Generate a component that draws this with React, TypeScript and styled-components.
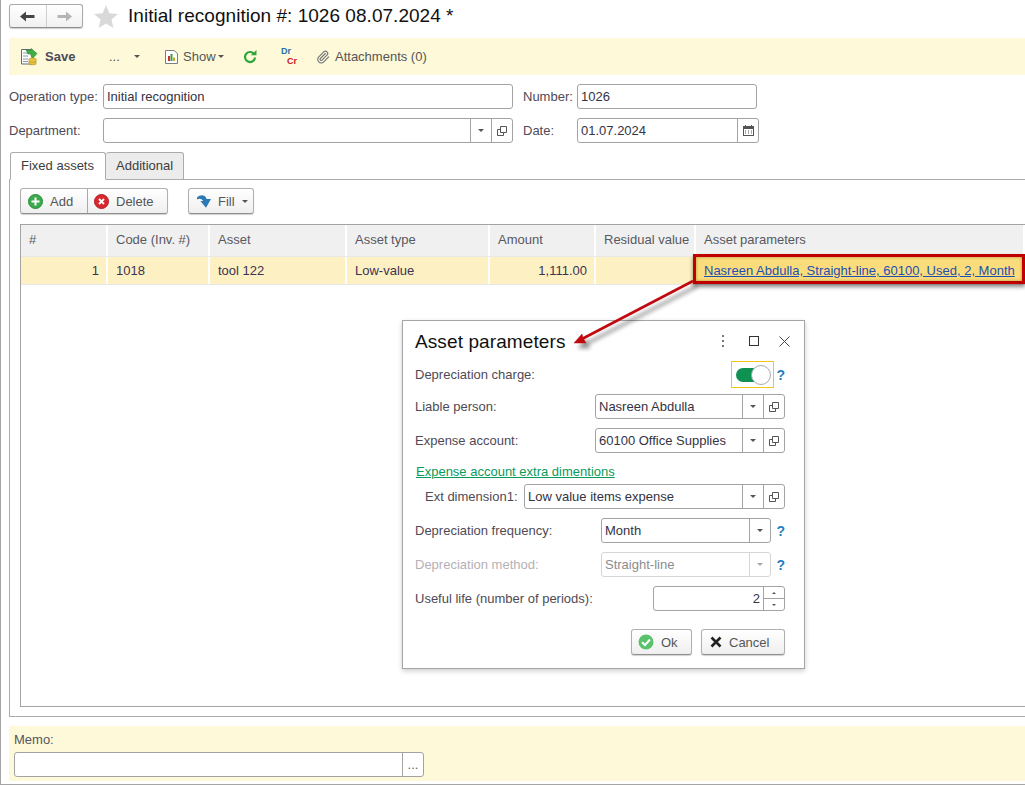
import React from 'react';
import styled, { createGlobalStyle } from 'styled-components';
import { Paperclip } from 'lucide-react';

const GlobalStyle = createGlobalStyle`
  html, body {
    margin: 0;
    padding: 0;
    background: #fff;
  }
  * {
    box-sizing: border-box;
  }
`;

const Page = styled.div`
  position: relative;
  width: 1025px;
  height: 785px;
  overflow: hidden;
  background: #fff;
  border-left: 1px solid #a5a5a5;
  border-bottom: 1px solid #a5a5a5;
  padding: 4px 0 0 8px;
  font-family: 'Liberation Sans', Arial, sans-serif;
  font-size: 13px;
  color: #4b4b4b;
`;

const Header = styled.div`
  display: flex;
  align-items: center;
  height: 24px;
`;

const NavGroup = styled.div`
  display: flex;
  width: 74px;
  height: 24px;
  border: 1px solid #a9a9a9;
  border-bottom-color: #8f8f8f;
  border-radius: 3px;
  background: linear-gradient(#ffffff, #f1f1f1);
  box-shadow: 0 1px 1px rgba(0, 0, 0, 0.2);
`;

const NavCell = styled.div<{ $divider?: boolean }>`
  flex: 1;
  display: flex;
  align-items: center;
  justify-content: center;
  border-right: ${(p) => (p.$divider ? '1px solid #cfcfcf' : 'none')};
`;

const StarWrap = styled.div`
  margin-left: 11px;
  width: 25px;
  height: 24px;
  display: flex;
  align-items: center;
`;

const Title = styled.h1`
  margin: 0 0 0 9px;
  font-size: 19px;
  font-weight: 400;
  letter-spacing: 0.03px;
  color: #111;
`;

const Toolbar = styled.div`
  display: flex;
  align-items: center;
  height: 37px;
  margin-top: 10px;
  background: #fef9d9;
  padding-left: 11px;
`;

const ToolItem = styled.div<{ $w: number }>`
  display: flex;
  align-items: center;
  width: ${(p) => p.$w}px;
  flex: none;
  gap: 5px;
  color: #555;
  white-space: nowrap;
`;

const SaveLabel = styled.span`
  font-weight: 700;
  margin-left: 2px;
  color: #4a4a58;
`;

const Caret = styled.span<{ $c?: string }>`
  display: inline-block;
  width: 0;
  height: 0;
  border-left: 3px solid transparent;
  border-right: 3px solid transparent;
  border-top: 3px solid ${(p) => p.$c || '#555'};
`;

const DrCr = styled.div`
  width: 18px;
  height: 20px;
  font-size: 9px;
  font-weight: 700;
  line-height: 8px;
`;

const Dr = styled.span`
  display: block;
  color: #2a6fa8;
`;

const Cr = styled.span`
  display: block;
  color: #c4161c;
  margin: 2px 0 0 6px;
`;

const FormRow = styled.div<{ $mt: number }>`
  display: flex;
  align-items: center;
  height: 25px;
  margin-top: ${(p) => p.$mt}px;
`;

const Label = styled.label<{ $w: number; $muted?: boolean; $pl?: number }>`
  flex: none;
  width: ${(p) => p.$w}px;
  padding-left: ${(p) => p.$pl || 0}px;
  white-space: nowrap;
  color: ${(p) => (p.$muted ? '#b5b0b5' : '#4f4a55')};
`;

const Field = styled.div<{ $w: number; $muted?: boolean }>`
  flex: none;
  display: flex;
  align-items: stretch;
  width: ${(p) => p.$w}px;
  height: 25px;
  border: 1px solid ${(p) => (p.$muted ? '#d6d6d6' : '#a3a3a3')};
  border-radius: 3px;
  background: #fff;
  color: ${(p) => (p.$muted ? '#8c8c8c' : '#333344')};
`;

const FieldText = styled.div<{ $right?: boolean }>`
  flex: 1;
  min-width: 0;
  line-height: 23px;
  padding: 0 3px;
  white-space: nowrap;
  text-align: ${(p) => (p.$right ? 'right' : 'left')};
`;

const FieldBtn = styled.div<{ $muted?: boolean }>`
  flex: none;
  width: 21px;
  display: flex;
  align-items: center;
  justify-content: center;
  border-left: 1px solid ${(p) => (p.$muted ? '#d6d6d6' : '#a3a3a3')};
  color: #666;
`;

const Spin = styled.div`
  flex: none;
  width: 21px;
  display: flex;
  flex-direction: column;
  border-left: 1px solid #a3a3a3;
`;

const SpinCell = styled.div<{ $up?: boolean }>`
  flex: 1;
  display: flex;
  align-items: center;
  justify-content: center;
  border-bottom: ${(p) => (p.$up ? '1px solid #a3a3a3' : 'none')};
`;

const CaretUp = styled.span`
  width: 0;
  height: 0;
  border-left: 2px solid transparent;
  border-right: 2px solid transparent;
  border-bottom: 2px solid #555;
`;

const CaretDown = styled.span`
  width: 0;
  height: 0;
  border-left: 2px solid transparent;
  border-right: 2px solid transparent;
  border-top: 2px solid #555;
`;

const Tabs = styled.div`
  display: flex;
  margin-top: 9px;
  height: 28px;
  position: relative;
  z-index: 1;
  padding-left: 1px;
`;

const Tab = styled.div<{ $active?: boolean; $w: number }>`
  width: ${(p) => p.$w}px;
  height: 28px;
  line-height: 26px;
  padding-left: ${(p) => (p.$active ? 10 : 10)}px;
  border: 1px solid #ababab;
  border-left-width: ${(p) => (p.$active ? 1 : 0)}px;
  border-bottom: ${(p) => (p.$active ? '1px solid #fff' : '1px solid #ababab')};
  border-radius: 3px 3px 0 0;
  background: ${(p) => (p.$active ? '#fff' : '#ececec')};
  color: #3d3d3d;
`;

const TabPanel = styled.div`
  margin-top: -1px;
  height: 538px;
  border: 1px solid #ababab;
  border-right: none;
  padding: 8px 0 0 10px;
`;

const ButtonBar = styled.div`
  display: flex;
  height: 26px;
`;

const BtnGroup = styled.div<{ $ml?: number }>`
  display: flex;
  height: 26px;
  margin-left: ${(p) => p.$ml || 0}px;
  border: 1px solid #b0b0b0;
  border-bottom-color: #8f8f8f;
  border-radius: 3px;
  background: linear-gradient(#ffffff, #efefef);
  box-shadow: 0 1px 1px rgba(0, 0, 0, 0.18);
`;

const Btn = styled.div<{ $w: number; $divider?: boolean; $pl: number; $gap?: number }>`
  display: flex;
  align-items: center;
  width: ${(p) => p.$w}px;
  padding-left: ${(p) => p.$pl}px;
  gap: ${(p) => p.$gap ?? 7}px;
  border-right: ${(p) => (p.$divider ? '1px solid #a9a9a9' : 'none')};
  color: #555;
`;

const Table = styled.div`
  margin-top: 10px;
  height: 483px;
  border: 1px solid #a3a3a3;
  border-right: none;
`;

const TableRow = styled.div<{ $h: number }>`
  display: grid;
  grid-template-columns: 87px 102px 137px 143px 106px 100px 1fr;
  height: ${(p) => p.$h}px;
  border-bottom: 1px solid #e8e8e8;
`;

const HeadCell = styled.div`
  display: flex;
  align-items: center;
  padding: 0 8px 2px;
  background: #f0f0f0;
  border-right: 2px solid #fff;
  white-space: nowrap;
  color: #58585f;
`;

const Cell = styled.div<{ $right?: boolean }>`
  display: flex;
  align-items: center;
  justify-content: ${(p) => (p.$right ? 'flex-end' : 'flex-start')};
  padding: 0 7px;
  background: #fdf0c3;
  border-right: 2px solid #fff;
  white-space: nowrap;
  color: #3c3350;
`;

const LeftCell = styled(Cell)`
  padding-left: 8px;
`;

const LinkCell = styled(Cell)`
  padding-left: 8px;
  color: #1d4fb0;
  text-decoration: underline;
  background: #fbdc7c;
`;

const Memo = styled.div`
  margin-top: 9px;
  height: 55px;
  background: #fef9d9;
  padding: 6px 0 0 5px;
`;

const MemoLabel = styled.div`
  height: 20px;
  line-height: 16px;
  color: #55555f;
`;

const Highlight = styled.div`
  position: absolute;
  left: 692px;
  top: 254px;
  width: 332px;
  height: 30px;
  border: 3px solid #c00000;
  box-shadow: 0 3px 4px rgba(0, 0, 0, 0.45), inset 0 0 3px rgba(120, 90, 0, 0.6);
  pointer-events: none;
`;

const ArrowSvg = styled.svg`
  position: absolute;
  left: 560px;
  top: 275px;
  z-index: 3;
  overflow: visible;
  filter: drop-shadow(4px 5px 2px rgba(0, 0, 0, 0.45));
`;

const Dialog = styled.div`
  position: absolute;
  left: 401px;
  top: 320px;
  width: 403px;
  height: 349px;
  background: #fff;
  border: 1px solid #a5a5a5;
  box-shadow: 0 2px 5px rgba(0, 0, 0, 0.2);
  padding: 0 19px 0 12px;
  z-index: 2;
`;

const DialogHead = styled.div`
  display: flex;
  align-items: center;
  justify-content: space-between;
  height: 40px;
`;

const DialogTitle = styled.div`
  font-size: 19px;
  letter-spacing: 0.1px;
  color: #111;
  margin-top: 2px;
`;

const DialogIcons = styled.div`
  display: flex;
  align-items: center;
  gap: 20px;
  margin-right: -5px;
`;

const DialogRow = styled.div<{ $mt: number; $h?: number }>`
  display: flex;
  align-items: center;
  height: ${(p) => p.$h || 25}px;
  margin-top: ${(p) => p.$mt}px;
`;

const Spacer = styled.div`
  flex: 1;
`;

const Help = styled.span`
  flex: none;
  width: 14px;
  text-align: right;
  font-weight: 700;
  font-size: 14px;
  color: #1f7fc4;
`;

const ToggleFocus = styled.div`
  display: flex;
  align-items: center;
  justify-content: center;
  width: 43px;
  height: 27px;
  margin-right: -3px;
  border: 1px solid #f5c518;
`;

const ToggleTrack = styled.div`
  position: relative;
  width: 34px;
  height: 14px;
  border-radius: 7px;
  background: #0f9152;
`;

const ToggleKnob = styled.div`
  position: absolute;
  right: -1px;
  top: -3px;
  width: 20px;
  height: 20px;
  border-radius: 50%;
  background: #fff;
  border: 1px solid #a8a8a8;
`;

const SectionLink = styled.a`
  display: block;
  margin-top: 11px;
  height: 16px;
  line-height: 16px;
  padding-left: 1px;
  color: #0a9a5c;
  text-decoration: underline;
`;

const DialogFooter = styled.div`
  display: flex;
  justify-content: flex-end;
  gap: 9px;
  margin-top: 18px;
`;

const DialogBtn = styled.div<{ $w: number; $pl: number }>`
  display: flex;
  align-items: center;
  gap: 7px;
  width: ${(p) => p.$w}px;
  height: 26px;
  padding-left: ${(p) => p.$pl}px;
  border: 1px solid #b0b0b0;
  border-bottom-color: #8f8f8f;
  border-radius: 3px;
  background: linear-gradient(#ffffff, #efefef);
  box-shadow: 0 1px 1px rgba(0, 0, 0, 0.18);
  color: #555;
`;

const OpenIcon = () => (
  <svg width="10" height="10" viewBox="0 0 10 10" fill="none" stroke="#555" strokeWidth="1">
    <path d="M3.5 0.5H9.5V6.5H3.5Z" />
    <path d="M3.5 3.5H0.5V9.5H6.5V6.5" />
  </svg>
);

const CalendarIcon = () => (
  <svg width="11" height="11" viewBox="0 0 11 11">
    <rect x="0.5" y="1.5" width="10" height="9" fill="#fff" stroke="#555" />
    <rect x="0" y="1" width="11" height="3" fill="#555" />
    <rect x="2" y="0" width="1" height="2" fill="#555" />
    <rect x="8" y="0" width="1" height="2" fill="#555" />
    <path d="M2 6h1M5 6h1M8 6h1M2 8h1M5 8h1M8 8h1" stroke="#555" />
  </svg>
);

const NavArrow = ({ color, flip }: { color: string; flip?: boolean }) => (
  <svg width="15" height="11" viewBox="0 0 15 11" style={flip ? { transform: 'scaleX(-1)' } : undefined}>
    <path d="M0 5.5L6 0.5V4H14.5V7H6V10.5Z" fill={color} />
  </svg>
);

const SaveIcon = () => (
  <svg width="18" height="18" viewBox="0 0 18 18">
    <path d="M1.5 1.5H12V16H1.5Z" fill="#fff" stroke="#5d6b78" />
    <path d="M3 5h7M3 8h5M3 11h5M3 13.5h5" stroke="#8b98a5" />
    <path d="M6 2H11V0.5L17 5.5L13 10L11 8V6H8Z" fill="#3fae45" stroke="#2a8a33" strokeWidth="0.6" />
    <ellipse cx="12.5" cy="11.5" rx="3.6" ry="1.5" fill="#e9c53f" stroke="#a88a1c" strokeWidth="0.6" />
    <path d="M9 11.5V16c0 1 7 1 7 0V11.5" fill="#e9c53f" stroke="#a88a1c" strokeWidth="0.6" />
    <path d="M9 13.5c0 1 7 1 7 0" fill="none" stroke="#a88a1c" strokeWidth="0.6" />
  </svg>
);

const ShowIcon = () => (
  <svg width="13" height="14" viewBox="0 0 13 14">
    <path d="M0.5 0.5H9L12.5 3.5V13.5H0.5Z" fill="#fff" stroke="#7d7d7d" />
    <rect x="3" y="6" width="2" height="5" fill="#c4332b" />
    <rect x="5.5" y="4" width="2" height="7" fill="#3f9c45" />
    <rect x="8" y="7.5" width="2" height="3.5" fill="#d9a21c" />
  </svg>
);

const RefreshIcon = () => (
  <svg width="14" height="14" viewBox="0 0 14 14" fill="none">
    <path d="M11.3 4.4A5 5 0 1 0 12 7.5" stroke="#2fa53a" strokeWidth="2.2" />
    <path d="M7.8 5.2H13.5V0Z" fill="#2fa53a" />
  </svg>
);

const Star = () => (
  <svg width="24" height="23" viewBox="0 0 24 23">
    <path d="M12 0L15.4 8.2L24 8.9L17.5 14.6L19.4 23L12 18.5L4.6 23L6.5 14.6L0 8.9L8.6 8.2Z" fill="#d9d9d9" />
  </svg>
);

const AddIcon = () => (
  <svg width="15" height="15" viewBox="0 0 15 15">
    <circle cx="7.5" cy="7.5" r="7" fill="#3aaa4a" stroke="#2b8a3a" />
    <path d="M7.5 3.5v8M3.5 7.5h8" stroke="#fff" strokeWidth="2" />
  </svg>
);

const DeleteIcon = () => (
  <svg width="15" height="15" viewBox="0 0 15 15">
    <circle cx="7.5" cy="7.5" r="7" fill="#d8282f" stroke="#b51d24" />
    <path d="M5 5l5 5M10 5l-5 5" stroke="#fff" strokeWidth="1.8" />
  </svg>
);

const FillIcon = () => (
  <svg width="14" height="13" viewBox="0 0 14 13">
    <path d="M0 2.6C3 -0.4 7 -0.4 9 2.6L9.6 4H14L9 12.8L3.4 6H6.2C4.8 4 2.5 3.2 0 4.4Z" fill="#2b79b5" />
  </svg>
);

const OkIcon = () => (
  <svg width="16" height="16" viewBox="0 0 16 16">
    <circle cx="8" cy="8" r="7.5" fill="#59c26a" />
    <path d="M4 8.2L7 11L12 5.5" fill="none" stroke="#fff" strokeWidth="2" />
  </svg>
);

const CancelIcon = () => (
  <svg width="12" height="12" viewBox="0 0 12 12">
    <path d="M1.5 1.5L10.5 10.5M10.5 1.5L1.5 10.5" stroke="#222" strokeWidth="2.6" />
  </svg>
);

const MoreWrap = styled.span`
  display: flex;
  margin-right: 4px;
`;

const MoreIcon = () => (
  <MoreWrap>
    <svg width="4" height="12" viewBox="0 0 4 12">
      <path d="M1 0h2v2H1zM1 5h2v2H1zM1 10h2v2H1z" fill="#777" />
    </svg>
  </MoreWrap>
);

const MaxIcon = () => (
  <svg width="10" height="10" viewBox="0 0 10 10">
    <rect x="0.5" y="0.5" width="9" height="9" fill="none" stroke="#333" />
  </svg>
);

const CloseIcon = () => (
  <svg width="11" height="11" viewBox="0 0 11 11">
    <path d="M0.5 0.5L10.5 10.5M10.5 0.5L0.5 10.5" stroke="#444" />
  </svg>
);

const columns = ['#', 'Code (Inv. #)', 'Asset', 'Asset type', 'Amount', 'Residual value', 'Asset parameters'];

const App = () => {
  return (
    <Page>
      <GlobalStyle />
      <Header>
        <NavGroup>
          <NavCell $divider>
            <NavArrow color="#444" />
          </NavCell>
          <NavCell>
            <NavArrow color="#b5b5b5" flip />
          </NavCell>
        </NavGroup>
        <StarWrap>
          <Star />
        </StarWrap>
        <Title>Initial recognition #: 1026 08.07.2024 *</Title>
      </Header>

      <Toolbar>
        <ToolItem $w={89}>
          <SaveIcon />
          <SaveLabel>Save</SaveLabel>
        </ToolItem>
        <ToolItem $w={56}>
          <span>...</span>
          <Caret style={{ marginLeft: 9 }} />
        </ToolItem>
        <ToolItem $w={78}>
          <ShowIcon />
          <span>Show</span>
          <Caret style={{ marginLeft: -3 }} />
        </ToolItem>
        <ToolItem $w={38}>
          <RefreshIcon />
        </ToolItem>
        <ToolItem $w={35}>
          <DrCr>
            <Dr>Dr</Dr>
            <Cr>Cr</Cr>
          </DrCr>
        </ToolItem>
        <ToolItem $w={130}>
          <Paperclip size={14} color="#777" />
          <span>Attachments (0)</span>
        </ToolItem>
      </Toolbar>

      <FormRow $mt={9}>
        <Label $w={94}>Operation type:</Label>
        <Field $w={410}>
          <FieldText>Initial recognition</FieldText>
        </Field>
        <Label $w={64} $pl={10}>Number:</Label>
        <Field $w={180}>
          <FieldText>1026</FieldText>
        </Field>
      </FormRow>
      <FormRow $mt={9}>
        <Label $w={94}>Department:</Label>
        <Field $w={410}>
          <FieldText />
          <FieldBtn>
            <Caret />
          </FieldBtn>
          <FieldBtn>
            <OpenIcon />
          </FieldBtn>
        </Field>
        <Label $w={64} $pl={10}>Date:</Label>
        <Field $w={182}>
          <FieldText>01.07.2024</FieldText>
          <FieldBtn>
            <CalendarIcon />
          </FieldBtn>
        </Field>
      </FormRow>

      <Tabs>
        <Tab $active $w={96}>Fixed assets</Tab>
        <Tab $w={78}>Additional</Tab>
      </Tabs>
      <TabPanel>
        <ButtonBar>
          <BtnGroup>
            <Btn $w={67} $divider $pl={7}>
              <AddIcon />
              Add
            </Btn>
            <Btn $w={79} $pl={6}>
              <DeleteIcon />
              Delete
            </Btn>
          </BtnGroup>
          <BtnGroup $ml={20}>
            <Btn $w={64} $pl={8} $gap={7}>
              <FillIcon />
              Fill
              <Caret />
            </Btn>
          </BtnGroup>
        </ButtonBar>
        <Table>
          <TableRow $h={32}>
            {columns.map((c) => (
              <HeadCell key={c}>{c}</HeadCell>
            ))}
          </TableRow>
          <TableRow $h={28}>
            <Cell $right>1</Cell>
            <LeftCell>1018</LeftCell>
            <LeftCell>tool 122</LeftCell>
            <LeftCell>Low-value</LeftCell>
            <Cell $right>1,111.00</Cell>
            <Cell />
            <LinkCell>Nasreen Abdulla, Straight-line, 60100, Used, 2, Month</LinkCell>
          </TableRow>
        </Table>
      </TabPanel>

      <Memo>
        <MemoLabel>Memo:</MemoLabel>
        <Field $w={410}>
          <FieldText />
          <FieldBtn>
            <span>...</span>
          </FieldBtn>
        </Field>
      </Memo>

      <Highlight />
      <ArrowSvg width="140" height="80" viewBox="0 0 140 80">
        <path d="M132 6L19 65" stroke="#c00a0f" strokeWidth="2.6" fill="none" />
        <path d="M13 68L21 59L22 63L25 68Z" fill="#c00a0f" stroke="#c00a0f" strokeWidth="0.5" />
      </ArrowSvg>

      <Dialog>
        <DialogHead>
          <DialogTitle>Asset parameters</DialogTitle>
          <DialogIcons>
            <MoreIcon />
            <MaxIcon />
            <CloseIcon />
          </DialogIcons>
        </DialogHead>
        <DialogRow $mt={0} $h={27}>
          <Label $w={180}>Depreciation charge:</Label>
          <Spacer />
          <ToggleFocus>
            <ToggleTrack>
              <ToggleKnob />
            </ToggleTrack>
          </ToggleFocus>
          <Help>?</Help>
        </DialogRow>
        <DialogRow $mt={6}>
          <Label $w={180}>Liable person:</Label>
          <Field $w={190}>
            <FieldText>Nasreen Abdulla</FieldText>
            <FieldBtn>
              <Caret />
            </FieldBtn>
            <FieldBtn>
              <OpenIcon />
            </FieldBtn>
          </Field>
        </DialogRow>
        <DialogRow $mt={9}>
          <Label $w={180}>Expense account:</Label>
          <Field $w={190}>
            <FieldText>60100 Office Supplies</FieldText>
            <FieldBtn>
              <Caret />
            </FieldBtn>
            <FieldBtn>
              <OpenIcon />
            </FieldBtn>
          </Field>
        </DialogRow>
        <SectionLink>Expense account extra dimentions</SectionLink>
        <DialogRow $mt={4}>
          <Label $w={109} $pl={10}>Ext dimension1:</Label>
          <Field $w={261}>
            <FieldText>Low value items expense</FieldText>
            <FieldBtn>
              <Caret />
            </FieldBtn>
            <FieldBtn>
              <OpenIcon />
            </FieldBtn>
          </Field>
        </DialogRow>
        <DialogRow $mt={9}>
          <Label $w={186}>Depreciation frequency:</Label>
          <Field $w={170}>
            <FieldText>Month</FieldText>
            <FieldBtn>
              <Caret />
            </FieldBtn>
          </Field>
          <Help>?</Help>
        </DialogRow>
        <DialogRow $mt={9}>
          <Label $w={186} $muted>Depreciation method:</Label>
          <Field $w={170} $muted>
            <FieldText>Straight-line</FieldText>
            <FieldBtn $muted>
              <Caret $c="#aaa" />
            </FieldBtn>
          </Field>
          <Help>?</Help>
        </DialogRow>
        <DialogRow $mt={9}>
          <Label $w={238}>Useful life (number of periods):</Label>
          <Field $w={132}>
            <FieldText $right>2</FieldText>
            <Spin>
              <SpinCell $up>
                <CaretUp />
              </SpinCell>
              <SpinCell>
                <CaretDown />
              </SpinCell>
            </Spin>
          </Field>
        </DialogRow>
        <DialogFooter>
          <DialogBtn $w={61} $pl={6}>
            <OkIcon />
            Ok
          </DialogBtn>
          <DialogBtn $w={84} $pl={8}>
            <CancelIcon />
            Cancel
          </DialogBtn>
        </DialogFooter>
      </Dialog>
    </Page>
  );
};

export default App;
